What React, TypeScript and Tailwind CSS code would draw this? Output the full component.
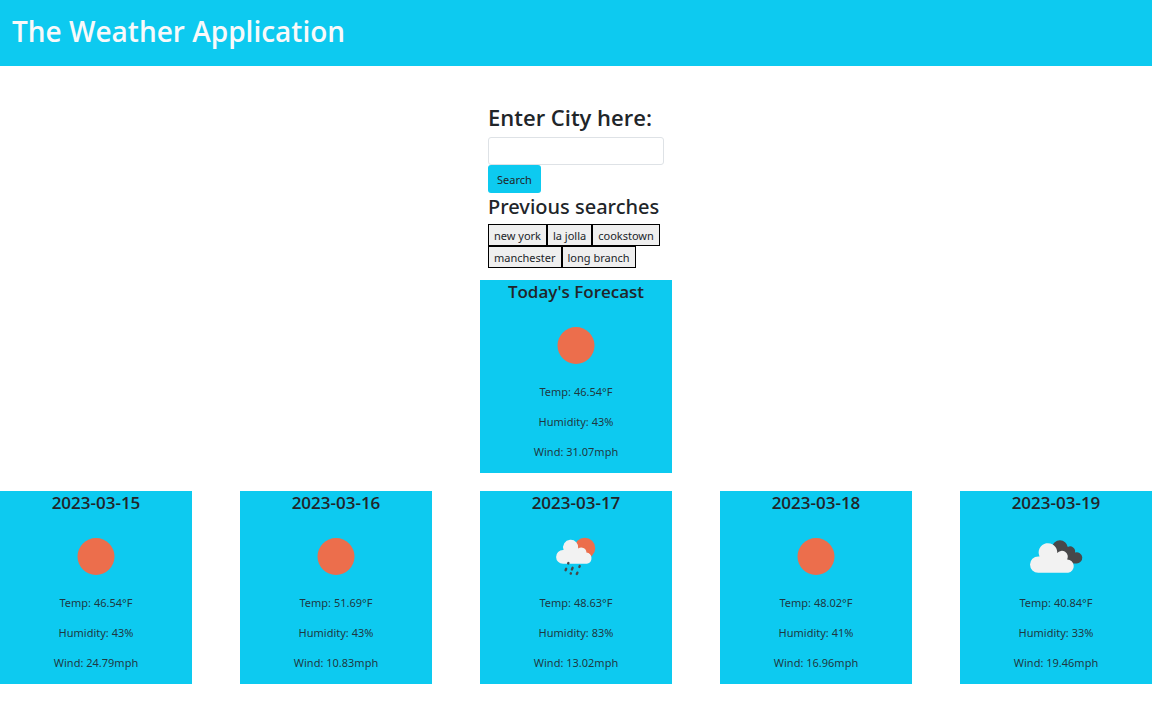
type Condition = 'clear' | 'rain' | 'clouds'

interface Forecast {
  title: string
  condition: Condition
  temp: string
  humidity: string
  wind: string
}

const today: Forecast = {
  title: "Today's Forecast",
  condition: 'clear',
  temp: '46.54',
  humidity: '43',
  wind: '31.07',
}

const week: Forecast[] = [
  { title: '2023-03-15', condition: 'clear', temp: '46.54', humidity: '43', wind: '24.79' },
  { title: '2023-03-16', condition: 'clear', temp: '51.69', humidity: '43', wind: '10.83' },
  { title: '2023-03-17', condition: 'rain', temp: '48.63', humidity: '83', wind: '13.02' },
  { title: '2023-03-18', condition: 'clear', temp: '48.02', humidity: '41', wind: '16.96' },
  { title: '2023-03-19', condition: 'clouds', temp: '40.84', humidity: '33', wind: '19.46' },
]

const searches = ['new york', 'la jolla', 'cookstown', 'manchester', 'long branch']

function WeatherIcon({ condition }: { condition: Condition }) {
  return (
    <svg viewBox="0 -1 76 76" className="size-[76px]" aria-hidden="true">
      {condition === 'clear' && <circle cx="38" cy="37.5" r="18.5" fill="#ec6e4c" />}
      {condition === 'rain' && (
        <>
          <circle cx="46.8" cy="29.2" r="10.4" fill="#ec6e4c" />
          <path
            d="M25 44.8a6.9 6.9 0 0 1 0-13.8h.6A7.6 7.6 0 1 1 40.2 29.6A5 5 0 0 1 48.4 33.4A5.8 5.8 0 0 1 49 44.8Z"
            fill="#f2f2f2"
          />
          <g stroke="#48484a" strokeWidth="2.4" strokeLinecap="round">
            <path d="M30.4 44l-.2.5M28.2 49.8l-.6 1.4M34.6 48.8l-.7 1.6M41.7 47.1l-.3.8M32.9 54.2l-.2.4M39.4 53.7l-.6 1.3" />
          </g>
        </>
      )}
      {condition === 'clouds' && (
        <>
          <path
            d="M34 28A8 8 0 0 1 49.8 28A5 5 0 0 1 57 33.5A5.6 5.6 0 1 1 58 44.4L48 44.4Z"
            fill="#48484a"
          />
          <path
            d="M20.2 53.8a8.2 8.2 0 0 1 0-16.4h1.3A9.3 9.3 0 1 1 39.2 34A6 6 0 0 1 49.2 40.5A6.7 6.7 0 0 1 50.2 53.8Z"
            fill="#f2f2f2"
          />
        </>
      )}
    </svg>
  )
}

function ForecastCard({ forecast }: { forecast: Forecast }) {
  return (
    <article className="flex w-1/6 flex-col items-center bg-[#0dcaf0] pb-3">
      <h2 className="font-['Open_Sans',sans-serif] text-[17px] leading-6 font-semibold">{forecast.title}</h2>
      <div className="flex h-[79px] items-end">
        <WeatherIcon condition={forecast.condition} />
      </div>
      <div className="flex flex-col gap-3 text-center text-[11px] leading-[18px] text-[#212529]/90">
        <p>Temp: {forecast.temp}°F</p>
        <p>Humidity: {forecast.humidity}%</p>
        <p>Wind: {forecast.wind}mph</p>
      </div>
    </article>
  )
}

export default function App() {
  return (
    <div className="bg-white pr-[9px] font-['Noto_Sans','Open_Sans',sans-serif] text-[#212529]">
      <header className="bg-[#0dcaf0] px-3 pt-[13px] pb-[17px]">
        <h1 className="font-['Open_Sans',sans-serif] text-[28px] leading-9 font-semibold text-[#f8f9fa]">
          The Weather Application
        </h1>
      </header>
      <main className="flex flex-col items-center pt-9">
        <section className="w-1/6 px-2 pb-3">
          <form onSubmit={(event) => event.preventDefault()}>
            <label
              htmlFor="city"
              className="block pb-[5px] font-['Open_Sans',sans-serif] text-[22px] leading-[30px] font-semibold whitespace-nowrap"
            >
              Enter City here:
            </label>
            <input
              id="city"
              type="text"
              className="block h-7 w-full rounded-[3px] border border-[#dee2e6] bg-white px-2 text-[11px]"
            />
            <button type="submit" className="block h-7 rounded-[3px] bg-[#0dcaf0] px-[9px] pt-0.5 text-[11px] leading-[18px]">
              Search
            </button>
          </form>
          <h2 className="pb-1 text-[20px] leading-[27px] font-medium whitespace-nowrap">Previous searches</h2>
          <div className="flex flex-wrap">
            {searches.map((city) => (
              <button
                key={city}
                type="button"
                className="h-[22px] border border-black bg-[#efefef] px-[5px] pt-px text-[11px] leading-[18px] whitespace-nowrap"
              >
                {city}
              </button>
            ))}
          </div>
        </section>
        <ForecastCard forecast={today} />
      </main>
      <section aria-label="Five day forecast" className="flex justify-between pt-[18px]">
        {week.map((forecast) => (
          <ForecastCard key={forecast.title} forecast={forecast} />
        ))}
      </section>
    </div>
  )
}
